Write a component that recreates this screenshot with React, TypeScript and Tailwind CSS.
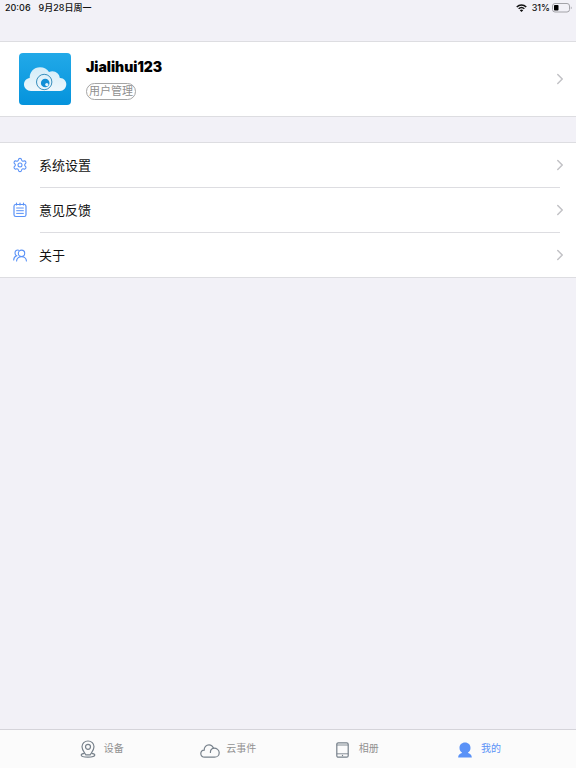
import React, { useState } from 'react';
import { ChevronRight, Settings } from 'lucide-react';

type TabId = 'device' | 'cloud' | 'album' | 'mine';

function WifiIcon() {
  return (
    <svg viewBox="0 0 22 16" className="w-[11px] h-2" fill="none" stroke="#111" strokeWidth="3">
      <path d="M1.5 6 C7 0.6 15 0.6 20.500 6" />
      <path d="M5.300 9.600 C8.500 6.600 13.500 6.600 16.700 9.600" />
      <path d="M11 16 L7.600 12.400 C9.500 10.600 12.500 10.600 14.400 12.400 Z" fill="#111" stroke="none" />
    </svg>
  );
}

function BatteryIcon() {
  return (
    <svg viewBox="0 0 20 10" className="w-5 h-[10px]" fill="none">
      <rect x="0.5" y="0.5" width="17" height="8.500" rx="2.500" stroke="#a3a3a8" />
      <rect x="2" y="2" width="4.500" height="5.500" rx="0.800" fill="#000" />
      <path d="M18.800 3.400 C20 3.800 20 5.900 18.800 6.300 Z" fill="#a3a3a8" />
    </svg>
  );
}

function CloudLogo() {
  return (
    <svg viewBox="0 0 52 52" className="w-[52px] h-[52px]">
      <defs>
        <linearGradient id="logoSky" x1="0" y1="0" x2="0" y2="1">
          <stop offset="0" stopColor="#22a9e8" />
          <stop offset="1" stopColor="#0593dc" />
        </linearGradient>
        <linearGradient id="logoCloud" x1="0" y1="0" x2="0" y2="1">
          <stop offset="0" stopColor="#d3ecf8" />
          <stop offset="1" stopColor="#eef7fc" />
        </linearGradient>
      </defs>
      <rect width="52" height="52" rx="4" fill="url(#logoSky)" />
      <path
        d="M12 38 C8 38 5 35 5 31.500 C5 28 7.500 25.300 10.700 25 C10.500 19 15 14.300 21 14.300 C25 14.300 28.200 16.200 30 19 C35 16.600 40.500 20 40.800 25 C44.800 24.800 47.300 28 47.300 31.300 C47.300 35 44.500 38 41 38 Z"
        fill="url(#logoCloud)"
      />
      <circle cx="25.200" cy="29" r="7.700" fill="none" stroke="#2482b5" strokeWidth="0.900" />
      <circle cx="26.200" cy="30" r="4.300" fill="#128fd6" />
      <circle cx="27.800" cy="31.600" r="1.600" fill="#e4f3fb" />
    </svg>
  );
}

function NoteIcon() {
  return (
    <svg viewBox="0 0 14 16" className="w-[14px] h-4" fill="none" stroke="#5a92f7" strokeLinecap="round">
      <rect x="1" y="2.500" width="12" height="12" rx="1.800" strokeWidth="1.200" />
      <path d="M3.500 1.200 V3 M7 1.200 V3 M10.500 1.200 V3" strokeWidth="1.200" />
      <path d="M3.600 6 H10.400 M3.600 8.700 H10.400 M3.600 11.400 H10.400" />
    </svg>
  );
}

function PeopleIcon() {
  return (
    <svg viewBox="0 0 14 13" className="w-[14px] h-[13px]" fill="none" stroke="#5a92f7" strokeWidth="1.100" strokeLinecap="round">
      <circle cx="8.500" cy="4.300" r="3.200" />
      <path d="M3.600 12 C3.600 9.400 5.800 7.600 8.500 7.600 C11.200 7.600 13.400 9.400 13.400 12" />
      <path d="M5.600 1.200 C3.800 0.500 2 1.900 2 3.900 C2 5.200 2.600 6.200 3.600 6.800 C1.900 7.500 0.700 9 0.700 11" />
    </svg>
  );
}

function PinIcon() {
  return (
    <svg viewBox="0 0 16 18" className="w-4 h-[18px]" fill="none" stroke="#77818b" strokeWidth="1.200">
      <path d="M5.800 14.800 C4.600 12.500 2 10.300 2 6.800 C2 3.500 4.600 1 8 1 C11.400 1 14 3.500 14 6.800 C14 10.300 11.400 12.500 10.200 14.800 Z" />
      <circle cx="8" cy="6.800" r="2.500" />
      <path d="M4.600 13.400 C2.500 13.700 1.200 14.300 1.200 15.100 C1.200 16.300 4 17.200 8 17.200 C12 17.200 14.800 16.300 14.800 15.100 C14.800 14.300 13.500 13.700 11.400 13.400" />
    </svg>
  );
}

function CloudIcon() {
  return (
    <svg viewBox="0 0 20 14" className="w-5 h-[14px]" fill="none" stroke="#77818b" strokeWidth="1.200" strokeLinecap="round">
      <path d="M4.600 13.200 C2.400 13.200 0.800 11.700 0.800 9.700 C0.800 7.800 2.300 6.300 4.200 6.200 C4 3.200 6.200 0.800 9 0.800 C11 0.800 12.700 2 13.500 4.200 C16.800 4 19.200 6 19.200 8.700 C19.200 11.300 17.200 13.200 14.500 13.200 Z" />
      <path d="M13.500 4.200 C11.600 4.700 10.400 6.300 10.400 8.400" />
    </svg>
  );
}

function TabletIcon() {
  return (
    <svg viewBox="0 0 13 16" className="w-[13px] h-4" fill="none" stroke="#77818b" strokeWidth="1.200">
      <rect x="0.800" y="0.800" width="11.400" height="14.400" rx="1.500" />
      <path d="M0.800 3 H12.200 M0.800 11.800 H12.200" strokeWidth="0.900" />
      <circle cx="6.500" cy="13.500" r="0.700" fill="#77818b" stroke="none" />
    </svg>
  );
}

function PersonIcon() {
  return (
    <svg viewBox="0 0 14 16" className="w-[14px] h-4" fill="#5a92f7">
      <path d="M7 0.500 C10.300 0.500 12.500 2.800 12.500 5.900 C12.500 8 11.500 9.600 10 10.500 C10.200 11.600 13.800 11.800 13.800 15.500 H0.200 C0.200 11.800 3.800 11.600 4 10.500 C2.500 9.600 1.500 8 1.500 5.900 C1.500 2.800 3.700 0.500 7 0.500 Z" />
    </svg>
  );
}

const menu = [
  { label: '系统设置', icon: <Settings size={16} strokeWidth={1.600} color="#5a92f7" /> },
  { label: '意见反馈', icon: <NoteIcon /> },
  { label: '关于', icon: <PeopleIcon /> },
];

const tabs: { id: TabId; label: string; icon: React.ReactNode }[] = [
  { id: 'device', label: '设备', icon: <PinIcon /> },
  { id: 'cloud', label: '云事件', icon: <CloudIcon /> },
  { id: 'album', label: '相册', icon: <TabletIcon /> },
  { id: 'mine', label: '我的', icon: <PersonIcon /> },
];

function Arrow() {
  return <ChevronRight size={18} strokeWidth={2} color="#c2c2c6" className="shrink-0" />;
}

export default function App() {
  const [tab, setTab] = useState<TabId>('mine');

  return (
    <div className="flex min-h-screen flex-col bg-[#f2f1f7] font-['Inter','Noto_Sans_CJK_SC',sans-serif] text-black">
      {/* Status bar */}
      <header className="flex h-4 items-center justify-between pl-[5px] pr-1 text-[9px] font-medium text-[#111]">
        <div className="flex gap-2">
          <span>20:06</span>
          <span>9月28日周一</span>
        </div>
        <div className="flex items-center">
          <WifiIcon />
          <span className="ml-[5px] mr-0.5">31%</span>
          <BatteryIcon />
        </div>
      </header>

      <main className="flex-1 pt-[25px]">
        {/* Profile */}
        <section className="flex h-[76px] items-center border-y border-[#dddde1] bg-white pl-[19px] pr-[7px]">
          <CloudLogo />
          <div className="ml-[15px] flex flex-1 flex-col items-start gap-1.5 pb-0.5">
            <h1 className="text-[14px] leading-5 font-black">Jialihui123</h1>
            <button className="h-[17px] rounded-full border border-[#a5a5a5] px-0.5 text-[11px] leading-[15px] text-[#8f8f8f]">
              用户管理
            </button>
          </div>
          <Arrow />
        </section>

        {/* Menu */}
        <ul className="mt-[25px] border-y border-[#dddde1] bg-white">
          {menu.map((item, i) => (
            <li key={item.label}>
              <button className="flex h-11 w-full items-center pr-[7px] text-left">
                <span className="flex w-[39px] justify-center">{item.icon}</span>
                <span className="flex-1 pt-0.5 text-[13px] text-[#111]">{item.label}</span>
                <Arrow />
              </button>
              {i < menu.length - 1 && <div className="ml-10 mr-4 h-px bg-[#dddde1]" />}
            </li>
          ))}
        </ul>
      </main>

      {/* Tab bar */}
      <nav className="flex h-[39px] justify-between border-t border-[#d5d4da] bg-[#fbfbfb] pl-[13.5%] pr-[13%]">
        {tabs.map(t => (
          <button
            key={t.id}
            onClick={() => setTab(t.id)}
            className={`flex items-center gap-1.5 text-[10px] ${tab === t.id ? 'text-[#5a92f7]' : 'text-[#929292]'}`}
          >
            <span className="flex h-[18px] w-5 items-end justify-center">{t.icon}</span>
            <span className="pb-0.5">{t.label}</span>
          </button>
        ))}
      </nav>
    </div>
  );
}
